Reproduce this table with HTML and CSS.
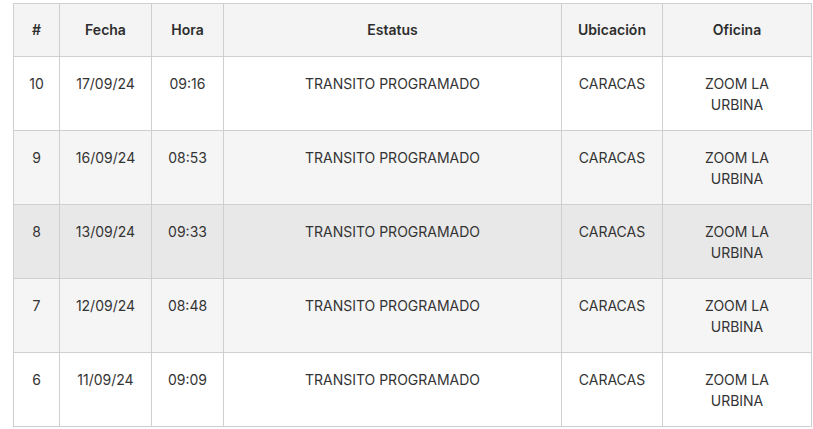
FILE: index.html
```html
<!DOCTYPE html>
<html lang="es">
<head>
<meta charset="utf-8">
<link rel="stylesheet" href="styles.css">
</head>
<body>
<div class="wrap">
<table class="track">
<colgroup>
<col class="c1"><col class="c2"><col class="c3"><col class="c4"><col class="c5"><col class="c6">
</colgroup>
<thead>
<tr><th>#</th><th>Fecha</th><th>Hora</th><th>Estatus</th><th>Ubicación</th><th>Oficina</th></tr>
</thead>
<tbody>
<tr><td>10</td><td>17/09/24</td><td>09:16</td><td>TRANSITO PROGRAMADO</td><td>CARACAS</td><td>ZOOM LA<br>URBINA</td></tr>
<tr class="alt"><td>9</td><td>16/09/24</td><td>08:53</td><td>TRANSITO PROGRAMADO</td><td>CARACAS</td><td>ZOOM LA<br>URBINA</td></tr>
<tr class="hover"><td>8</td><td>13/09/24</td><td>09:33</td><td>TRANSITO PROGRAMADO</td><td>CARACAS</td><td>ZOOM LA<br>URBINA</td></tr>
<tr class="alt"><td>7</td><td>12/09/24</td><td>08:48</td><td>TRANSITO PROGRAMADO</td><td>CARACAS</td><td>ZOOM LA<br>URBINA</td></tr>
<tr><td>6</td><td>11/09/24</td><td>09:09</td><td>TRANSITO PROGRAMADO</td><td>CARACAS</td><td>ZOOM LA<br>URBINA</td></tr>
</tbody>
</table>
</div>
</body>
</html>
```
FILE: styles.css
```css
html, body {
  margin: 0;
  padding: 0;
  background: #ffffff;
}
.wrap {
  padding: 3px 2px 0 13px;
}
.track {
  border-collapse: collapse;
  width: 798px;
  table-layout: fixed;
  font-family: Inter, "Open Sans", Arial, sans-serif;
  font-size: 14px;
  line-height: 21px;
  color: #333333;
}
.c1 { width: 46px; }
.c2 { width: 92px; }
.c3 { width: 72px; }
.c4 { width: 338px; }
.c5 { width: 101px; }
.c6 { width: 149px; }
.track th, .track td {
  border: 1px solid #cfcfcf;
  text-align: center;
  vertical-align: top;
}
.track th {
  background: #f4f4f4;
  font-weight: 600;
  padding: 15px 6px 16px;
  color: #2e2e2e;
}
.track td {
  padding: 16px 6px 15px;
  font-weight: 400;
}
.track tr.alt td {
  background: #f5f5f5;
}
.track tr.hover td {
  background: #e8e8e8;
}
```
